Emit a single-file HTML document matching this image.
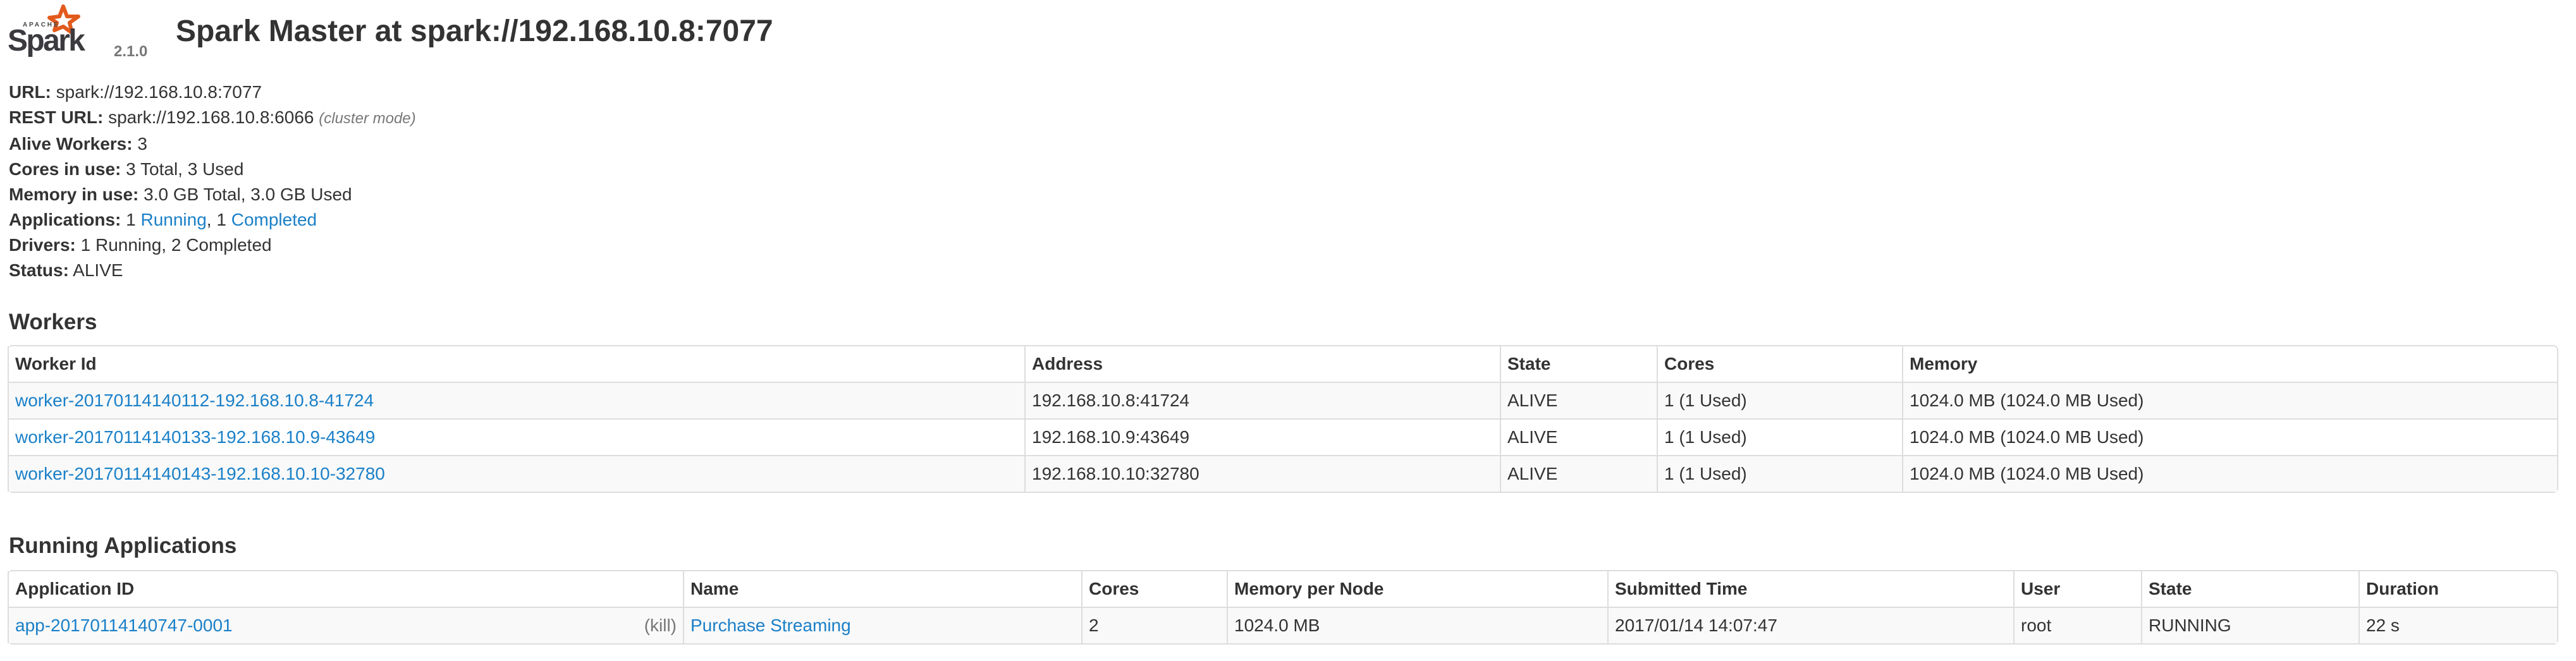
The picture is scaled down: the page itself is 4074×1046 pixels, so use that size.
<!DOCTYPE html>
<html><head><meta charset="utf-8">
<style>
html,body{margin:0;padding:0;background:#fff;}
body{zoom:2;width:2037px;height:523px;overflow:hidden;font-family:"Liberation Sans",Arial,sans-serif;font-size:14px;line-height:20px;color:#333;position:relative;}
a{color:#1a80c8;text-decoration:none;}
.logo{position:absolute;left:0;top:0;}
.ver{position:absolute;left:90px;top:31px;font-size:12px;font-weight:bold;color:#777;}
h3{position:absolute;left:139px;top:5px;margin:0;font-size:24px;line-height:40px;font-weight:bold;}
ul{position:absolute;left:7px;top:63px;margin:0;padding:0;list-style:none;}
b{font-weight:bold;}
h4{position:absolute;left:7px;margin:0;font-size:17.5px;line-height:20px;font-weight:bold;}
table{position:absolute;left:6px;width:2017px;border-collapse:separate;border-spacing:0;table-layout:fixed;border:1px solid #ddd;border-left:0;border-radius:4px;}
th,td{padding:4px 5px;line-height:20px;text-align:left;border-left:1px solid #ddd;border-top:1px solid #ddd;white-space:nowrap;overflow:hidden;}
th{font-weight:bold;border-top:0;}
tbody tr:nth-child(odd) td{background:#f9f9f9;}
.kill{float:right;color:#777;}
</style></head><body>
<svg class="logo" width="90" height="50" viewBox="0 0 90 50">
<path d="M50 5 L53 13 L62 13 L55 18 L57 26 L50 21 L43 24 L45 18 L39 14 L47 13 Z" fill="none" stroke="#e25a1c" stroke-width="3" stroke-linejoin="round"/>
<text x="18" y="21" font-family="Liberation Sans,sans-serif" font-size="5" font-weight="bold" fill="#444" letter-spacing="1.4">APACHE</text>
<text x="6" y="40" font-family="Liberation Sans,sans-serif" font-size="24" font-weight="bold" fill="#3c3a3e" letter-spacing="-1.3">Spark</text>
</svg>
<span class="ver">2.1.0</span>
<h3>Spark Master at spark://192.168.10.8:7077</h3>
<ul>
<li><b>URL:</b> spark://192.168.10.8:7077</li>
<li><b>REST URL:</b> spark://192.168.10.8:6066 <span style="color:#777;font-style:italic;font-size:12px">(cluster mode)</span></li>
<li><b>Alive Workers:</b> 3</li>
<li><b>Cores in use:</b> 3 Total, 3 Used</li>
<li><b>Memory in use:</b> 3.0 GB Total, 3.0 GB Used</li>
<li><b>Applications:</b> 1 <a>Running</a>, 1 <a>Completed</a></li>
<li><b>Drivers:</b> 1 Running, 2 Completed</li>
<li><b>Status:</b> ALIVE</li>
</ul>
<h4 style="top:245px">Workers</h4>
<table style="top:273px">
<colgroup><col style="width:804px"><col style="width:376px"><col style="width:124px"><col style="width:194px"><col></colgroup>
<thead><tr><th>Worker Id</th><th>Address</th><th>State</th><th>Cores</th><th>Memory</th></tr></thead>
<tbody>
<tr><td><a>worker-20170114140112-192.168.10.8-41724</a></td><td>192.168.10.8:41724</td><td>ALIVE</td><td>1 (1 Used)</td><td>1024.0 MB (1024.0 MB Used)</td></tr>
<tr><td><a>worker-20170114140133-192.168.10.9-43649</a></td><td>192.168.10.9:43649</td><td>ALIVE</td><td>1 (1 Used)</td><td>1024.0 MB (1024.0 MB Used)</td></tr>
<tr><td><a>worker-20170114140143-192.168.10.10-32780</a></td><td>192.168.10.10:32780</td><td>ALIVE</td><td>1 (1 Used)</td><td>1024.0 MB (1024.0 MB Used)</td></tr>
</tbody></table>
<h4 style="top:422px">Running Applications</h4>
<table style="top:451px">
<colgroup><col style="width:534px"><col style="width:315px"><col style="width:115px"><col style="width:301px"><col style="width:321px"><col style="width:101px"><col style="width:172px"><col></colgroup>
<thead><tr><th>Application ID</th><th>Name</th><th>Cores</th><th>Memory per Node</th><th>Submitted Time</th><th>User</th><th>State</th><th>Duration</th></tr></thead>
<tbody>
<tr><td><a>app-20170114140747-0001</a><span class="kill">(kill)</span></td><td><a>Purchase Streaming</a></td><td>2</td><td>1024.0 MB</td><td>2017/01/14 14:07:47</td><td>root</td><td>RUNNING</td><td>22 s</td></tr>
</tbody></table>
</body></html>
